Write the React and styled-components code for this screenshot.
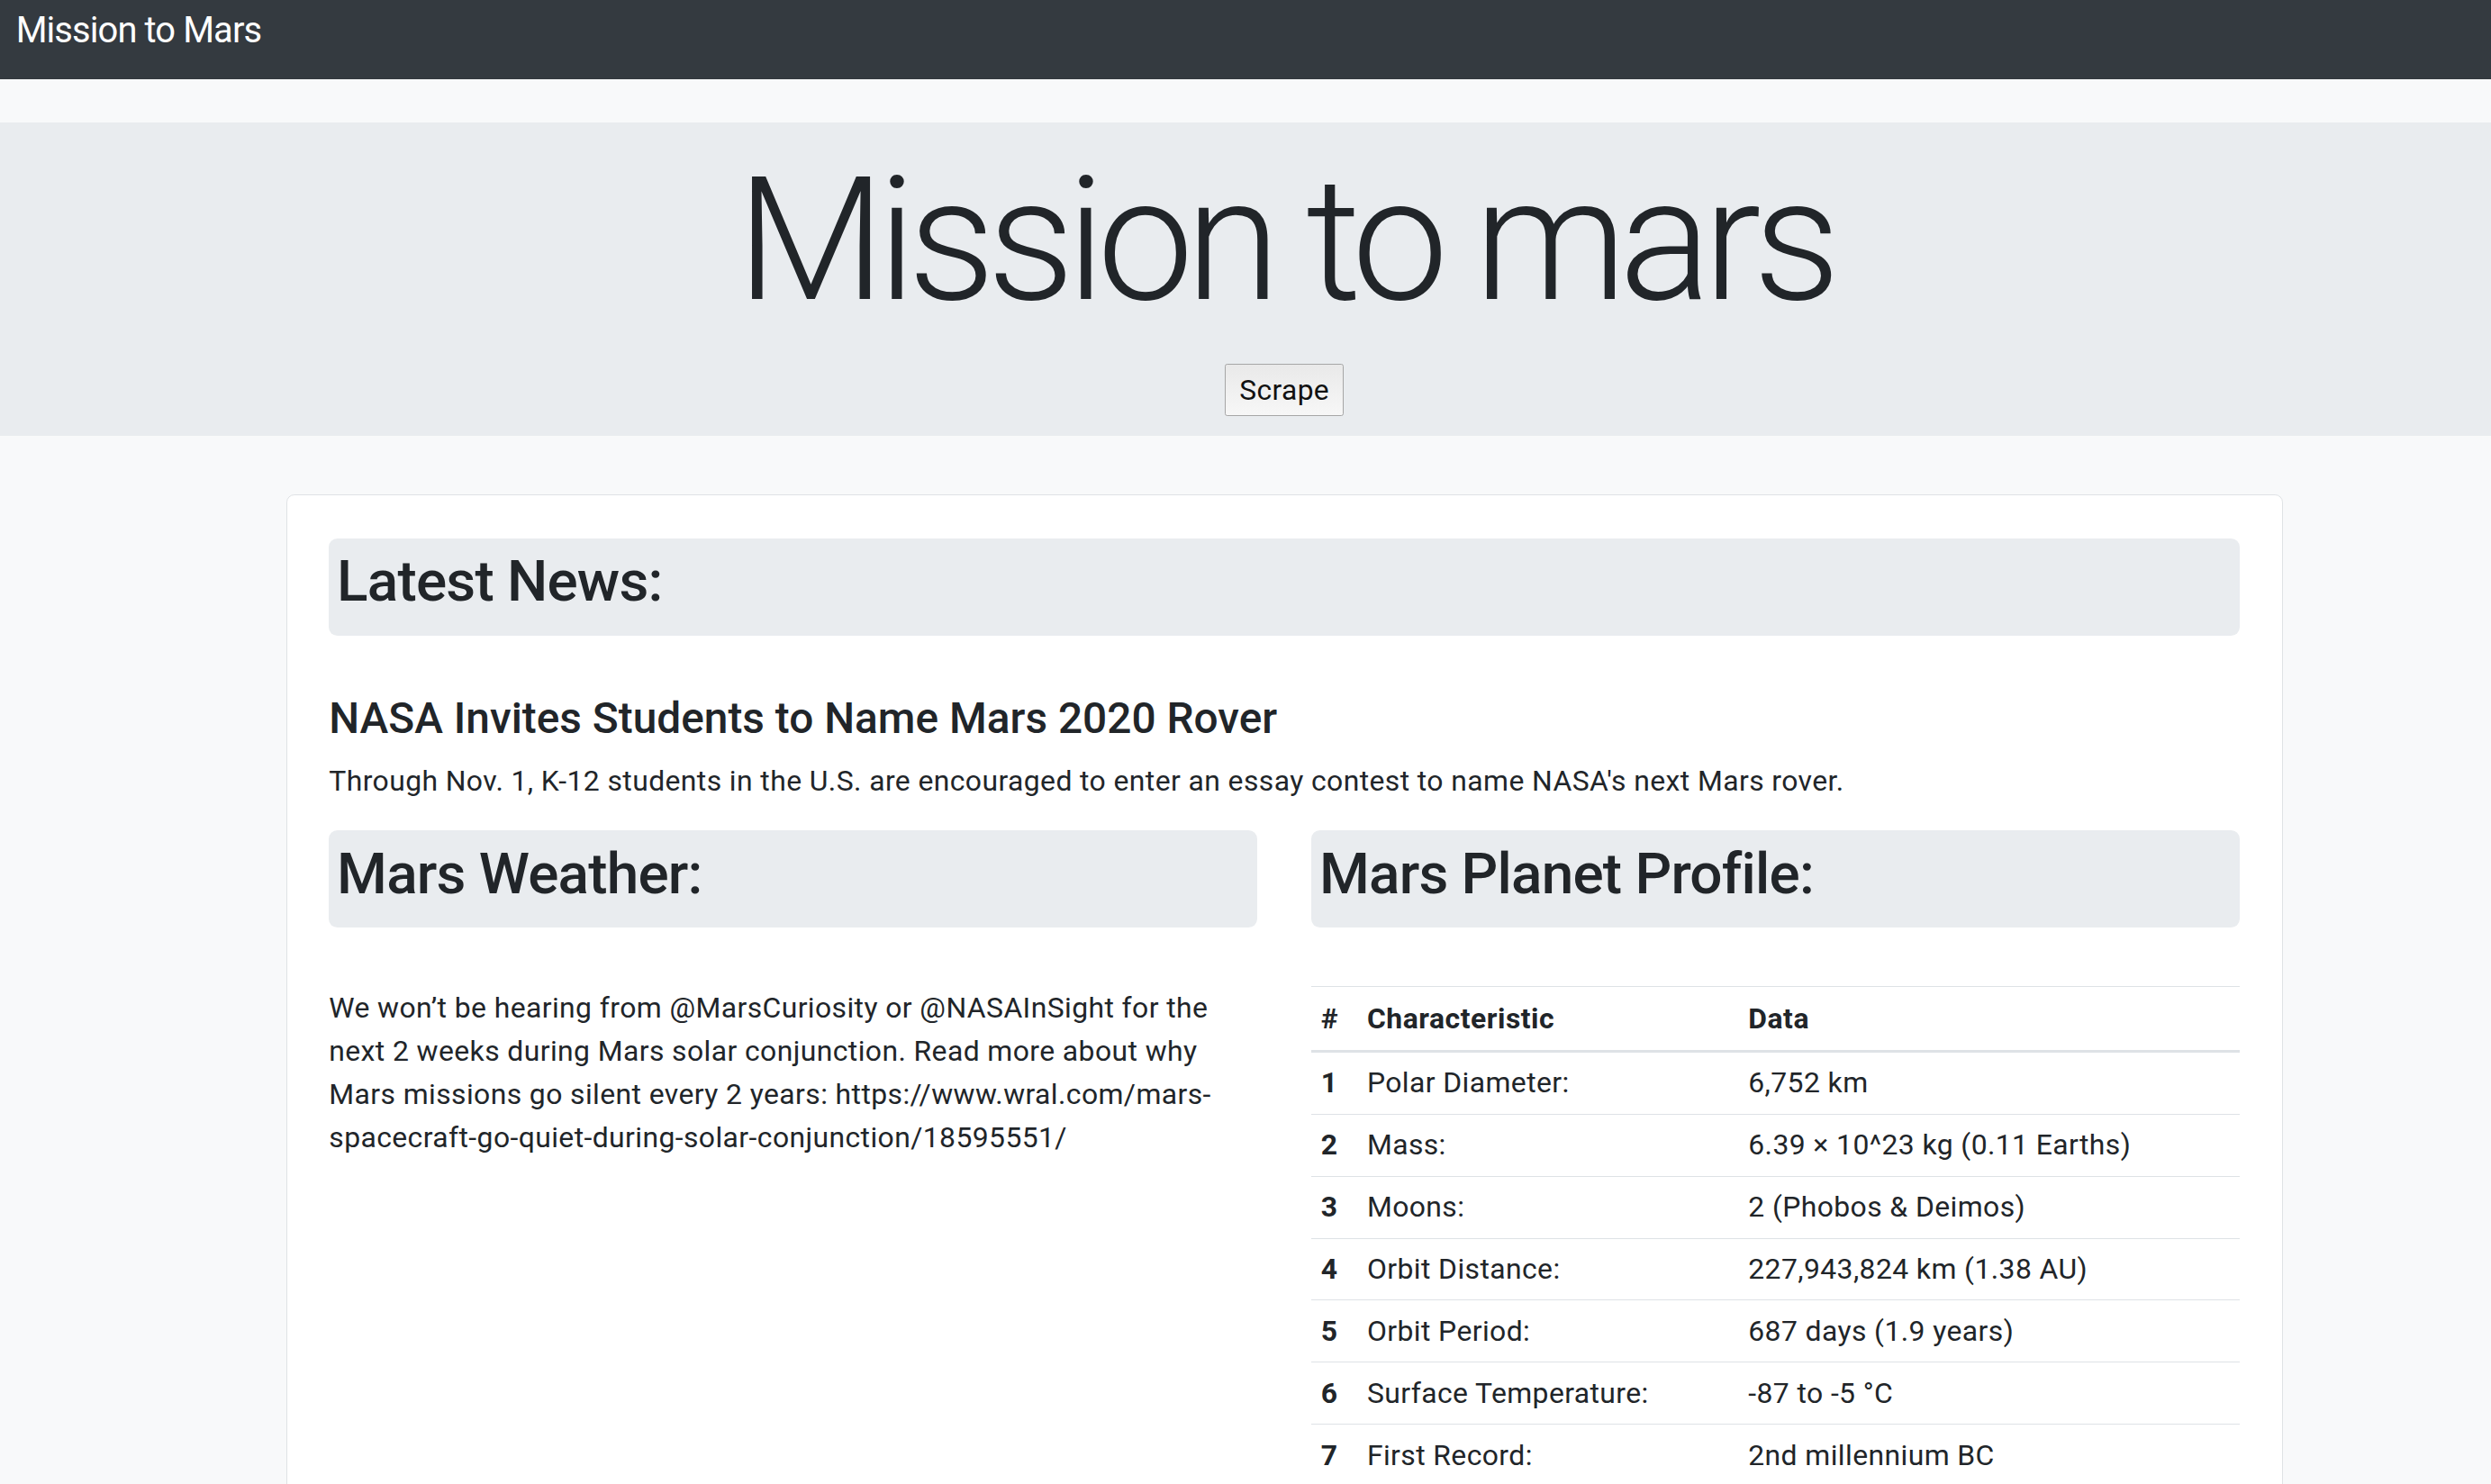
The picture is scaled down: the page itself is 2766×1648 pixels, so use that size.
import React from "react";
import styled, { createGlobalStyle } from "styled-components";

// the screenshot was taken at ~1.764 device pixels per css pixel
const u = (n) => `${+(n * 1.764).toFixed(2)}px`;

const GlobalStyle = createGlobalStyle`
    html, body {
        margin: 0;
        padding: 0;
        background: #f8f9fa;
        overflow: hidden;
    }
    body {
        font-family: Roboto, "Liberation Sans", sans-serif;
        color: #212529;
        font-size: ${u(18.08)};
        line-height: 1.5;
    }
    * {
        box-sizing: border-box;
    }
`;

const Page = styled.div`
    width: ${u(1617)};
`;

const Navbar = styled.nav`
    height: ${u(50)};
    background: #343a40;
    padding: ${u(2)} ${u(10)} 0;
`;

const Brand = styled.a`
    color: #fff;
    font-size: ${u(22.6)};
    line-height: 1.5;
    letter-spacing: ${u(-0.5)};
    text-decoration: none;
`;

const Jumbotron = styled.header`
    margin-top: ${u(27)};
    background: #e9ecef;
    padding: ${u(9)} 0 ${u(12)};
    display: flex;
    flex-direction: column;
    align-items: center;
`;

const Title = styled.h1`
    margin: 0 0 ${u(13)};
    font-size: ${u(108.5)};
    font-weight: 300;
    line-height: 1.2;
    letter-spacing: ${u(-5.1)};
`;

const ScrapeButton = styled.button`
    height: ${u(33)};
    padding: 0 ${u(8.5)};
    font-family: inherit;
    font-size: ${u(18)};
    letter-spacing: ${u(0.2)};
    color: #111;
    background: linear-gradient(#e9e9e9, #f7f7f7);
    border: ${u(1)} solid #a6a6a6;
    border-radius: ${u(1.5)};
`;

const Card = styled.main`
    margin: ${u(37)} auto 0;
    width: ${u(1257)};
    background: #fff;
    border: ${u(1)} solid #dfe2e5;
    border-radius: ${u(5)};
    padding: ${u(27)} ${u(26.5)} ${u(40)};
`;

const HeadBox = styled.div`
    background: #e9ecef;
    border-radius: ${u(5.5)};
    padding: ${u(6)} ${u(5)} ${u(11.8)};
    margin-bottom: ${u(36.8)};
`;

const SectionTitle = styled.h2`
    margin: 0;
    font-size: ${u(36.2)};
    font-weight: 500;
    line-height: 1.2;
    letter-spacing: ${u(-0.45)};
`;

const NewsTitle = styled.h4`
    margin: 0 0 ${u(8.2)};
    font-size: ${u(27.1)};
    font-weight: 500;
    line-height: 1.2;
    letter-spacing: 0;
`;

const Text = styled.p`
    margin: 0 0 ${u(17.4)};
    padding-top: ${u(0.8)};
    letter-spacing: ${u(0.23)};
`;

const Columns = styled.div`
    display: grid;
    grid-template-columns: 1fr 1fr;
    column-gap: ${u(34)};
`;

const Table = styled.table`
    width: 100%;
    border-collapse: collapse;
    letter-spacing: ${u(0.23)};

    th, td {
        padding: ${u(5.8)} ${u(6)} ${u(5.6)};
        text-align: left;
        vertical-align: top;
        border-top: ${u(1)} solid #dee2e6;
    }
    thead th {
        padding: ${u(6.6)} ${u(6)} ${u(5.8)};
        font-weight: 700;
        letter-spacing: ${u(0.3)};
        border-bottom: ${u(2)} solid #dee2e6;
    }
    tbody th {
        font-weight: 700;
    }
    tbody tr:first-child th,
    tbody tr:first-child td {
        border-top: 0;
    }
`;

const Col = styled.col`
    width: ${(p) => u(p.$w)};
`;

const profile = [
    ["Polar Diameter:", "6,752 km"],
    ["Mass:", "6.39 × 10^23 kg (0.11 Earths)"],
    ["Moons:", "2 (Phobos & Deimos)"],
    ["Orbit Distance:", "227,943,824 km (1.38 AU)"],
    ["Orbit Period:", "687 days (1.9 years)"],
    ["Surface Temperature:", "-87 to -5 °C"],
    ["First Record:", "2nd millennium BC"],
    ["Recorded By:", "Egyptian astronomers"],
];

function App() {
    return (
        <Page>
            <GlobalStyle />
            <Navbar>
                <Brand href="#">Mission to Mars</Brand>
            </Navbar>

            <Jumbotron>
                <Title>Mission to mars</Title>
                <ScrapeButton>Scrape</ScrapeButton>
            </Jumbotron>

            <Card>
                <HeadBox>
                    <SectionTitle>Latest News:</SectionTitle>
                </HeadBox>
                <NewsTitle>NASA Invites Students to Name Mars 2020 Rover</NewsTitle>
                <Text>
                    Through Nov. 1, K-12 students in the U.S. are encouraged to enter an essay contest to name NASA's next Mars rover.
                </Text>

                <Columns>
                    <section>
                        <HeadBox>
                            <SectionTitle>Mars Weather:</SectionTitle>
                        </HeadBox>
                        <Text>
                            We won’t be hearing from @MarsCuriosity or @NASAInSight for the next 2 weeks during Mars solar conjunction. Read more about why Mars missions go silent every 2 years: https://www.wral.com/mars-spacecraft-go-quiet-during-solar-conjunction/18595551/
                        </Text>
                    </section>
                    <section>
                        <HeadBox>
                            <SectionTitle>Mars Planet Profile:</SectionTitle>
                        </HeadBox>
                        <Table>
                            <colgroup>
                                <Col $w={29} />
                                <Col $w={240} />
                                <col />
                            </colgroup>
                            <thead>
                                <tr>
                                    <th>#</th>
                                    <th>Characteristic</th>
                                    <th>Data</th>
                                </tr>
                            </thead>
                            <tbody>
                                {profile.map(([name, value], i) => (
                                    <tr key={name}>
                                        <th>{i + 1}</th>
                                        <td>{name}</td>
                                        <td>{value}</td>
                                    </tr>
                                ))}
                            </tbody>
                        </Table>
                    </section>
                </Columns>
            </Card>
        </Page>
    );
}

export default App;
